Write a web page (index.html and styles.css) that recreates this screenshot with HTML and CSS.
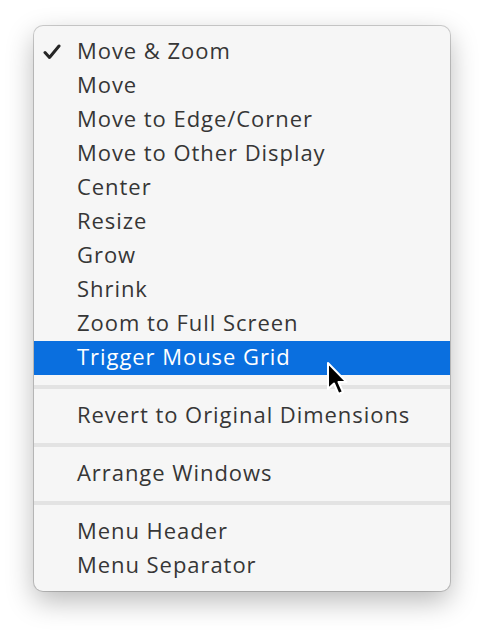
FILE: index.html
```html
<!DOCTYPE html>
<html lang="en">
<head>
    <meta charset="UTF-8">
    <meta name="viewport" content="width=device-width, initial-scale=1.0">
    <title>Menu</title>
    <link rel="stylesheet" href="styles.css">
</head>
<body>

    <div class="menu">
        <div class="item">
            <span class="check">
                <svg width="18" height="16" viewBox="0 0 18 16"><path d="M2 8.5 L6.5 13.5 L16 2" fill="none" stroke="#262626" stroke-width="3" stroke-linecap="round" stroke-linejoin="round"/></svg>
            </span>
            Move &amp; Zoom
        </div>
        <div class="item">Move</div>
        <div class="item">Move to Edge/Corner</div>
        <div class="item">Move to Other Display</div>
        <div class="item">Center</div>
        <div class="item">Resize</div>
        <div class="item">Grow</div>
        <div class="item">Shrink</div>
        <div class="item">Zoom to Full Screen</div>
        <div class="item selected">
            Trigger Mouse Grid
            <svg class="cursor" width="26" height="38" viewBox="0 0 26 38">
                <path d="M2 2 L2 28 L8 22.5 L12.5 33 L17 31 L12.5 21 L20.5 21 Z" fill="#000" stroke="#fff" stroke-width="2" stroke-linejoin="round"/>
            </svg>
        </div>
        <div class="separator"></div>
        <div class="item">Revert to Original Dimensions</div>
        <div class="separator"></div>
        <div class="item">Arrange Windows</div>
        <div class="separator"></div>
        <div class="item">Menu Header</div>
        <div class="item">Menu Separator</div>
    </div>

</body>
</html>
```

FILE: styles.css
```css
html {
    min-height: 632px;
}
body {
    margin: 0;
    padding: 26px 0 42px 34px;
    background-color: #ffffff;
    font-family: "Open Sans", "Liberation Sans", Arial, sans-serif;
}
.menu {
    width: 416px;
    box-sizing: border-box;
    padding: 9px 0 8px 0;
    background-color: #f6f6f6;
    border-radius: 9px;
    box-shadow: 0 0 0 1px rgba(0, 0, 0, 0.18), 0 10px 28px rgba(0, 0, 0, 0.28);
}
.item {
    position: relative;
    height: 34px;
    line-height: 31px;
    padding-left: 43px;
    font-size: 22px;
    letter-spacing: 0.95px;
    color: #363636;
}
.item.selected {
    background-color: #0a6fdf;
    color: #ffffff;
}
.check {
    position: absolute;
    left: 9px;
    top: 9px;
    line-height: 0;
}
.cursor {
    position: absolute;
    left: 292px;
    top: 20px;
}
.separator {
    height: 4px;
    margin: 10px 0;
    background-color: #e3e3e3;
}
```
